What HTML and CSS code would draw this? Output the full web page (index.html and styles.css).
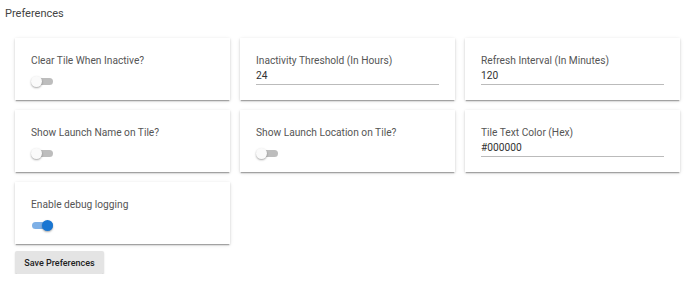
FILE: index.html
```html
<!DOCTYPE html>
<html lang="en">
<head>
    <meta charset="UTF-8">
    <meta name="viewport" content="width=device-width, initial-scale=1.0">
    <link rel="stylesheet" href="styles.css">
</head>
<body>
    <div class="page">
        <div class="page-title">Preferences</div>
        <div class="pref-grid">
            <div class="pref-card">
                <div class="pref-label">Clear Tile When Inactive?</div>
                <div class="switch"><span class="track"></span><span class="thumb"></span></div>
            </div>
            <div class="pref-card">
                <div class="pref-label">Inactivity Threshold (In Hours)</div>
                <div class="pref-input">24</div>
            </div>
            <div class="pref-card">
                <div class="pref-label">Refresh Interval (In Minutes)</div>
                <div class="pref-input">120</div>
            </div>
            <div class="pref-card">
                <div class="pref-label">Show Launch Name on Tile?</div>
                <div class="switch"><span class="track"></span><span class="thumb"></span></div>
            </div>
            <div class="pref-card">
                <div class="pref-label">Show Launch Location on Tile?</div>
                <div class="switch"><span class="track"></span><span class="thumb"></span></div>
            </div>
            <div class="pref-card">
                <div class="pref-label">Tile Text Color (Hex)</div>
                <div class="pref-input">#000000</div>
            </div>
            <div class="pref-card">
                <div class="pref-label">Enable debug logging</div>
                <div class="switch on"><span class="track"></span><span class="thumb"></span></div>
            </div>
        </div>
        <button class="save-btn">Save Preferences</button>
    </div>
</body>
</html>
```

FILE: styles.css
```css
body {
    margin: 0;
    font-family: Roboto, 'Liberation Sans', sans-serif;
    background: #fff;
    color: #444;
}
.page {
    padding: 6px 10px 0 5px;
}
.page-title {
    font-size: 11px;
    color: #444;
    line-height: 16px;
}
.pref-grid {
    display: grid;
    grid-template-columns: repeat(3, 215px);
    gap: 10px;
    margin: 16px 0 0 10px;
}
.pref-card {
    height: 62px;
    box-sizing: border-box;
    padding: 16px 16px 0 16px;
    background: #fff;
    box-shadow: 0 2px 1px -1px rgba(0,0,0,0.25), 0 1px 2px 0 rgba(0,0,0,0.14), 0 1px 4px 0 rgba(0,0,0,0.1);
}
.pref-label {
    font-size: 10.2px;
    line-height: 14px;
    color: #555;
}
.pref-input {
    margin-top: 1px;
    font-size: 10.2px;
    line-height: 14px;
    color: #333;
    border-bottom: 1px solid #bbb;
    padding-bottom: 1px;
}
.switch {
    position: relative;
    width: 22px;
    height: 11px;
    margin-top: 8px;
}
.switch .track {
    position: absolute;
    top: 2px;
    left: 1px;
    width: 21px;
    height: 7px;
    border-radius: 4px;
    background: #bdbdbd;
}
.switch .thumb {
    position: absolute;
    top: 0;
    left: 0;
    width: 11px;
    height: 11px;
    border-radius: 50%;
    background: #fafafa;
    box-shadow: 0 1px 2px rgba(0,0,0,0.35);
}
.switch.on .track {
    background: #7eb0e6;
}
.switch.on .thumb {
    left: 11px;
    background: #1976d2;
}
.save-btn {
    display: block;
    margin: 7px 0 0 10px;
    width: 89px;
    height: 23px;
    border: none;
    border-radius: 2px;
    background: #e4e4e4;
    color: #222;
    font-family: Roboto, 'Liberation Sans', sans-serif;
    font-size: 9px;
    font-weight: 500;
    padding: 0;
    box-shadow: 0 2px 1px -1px rgba(0,0,0,0.25), 0 1px 2px rgba(0,0,0,0.14);
}
```
